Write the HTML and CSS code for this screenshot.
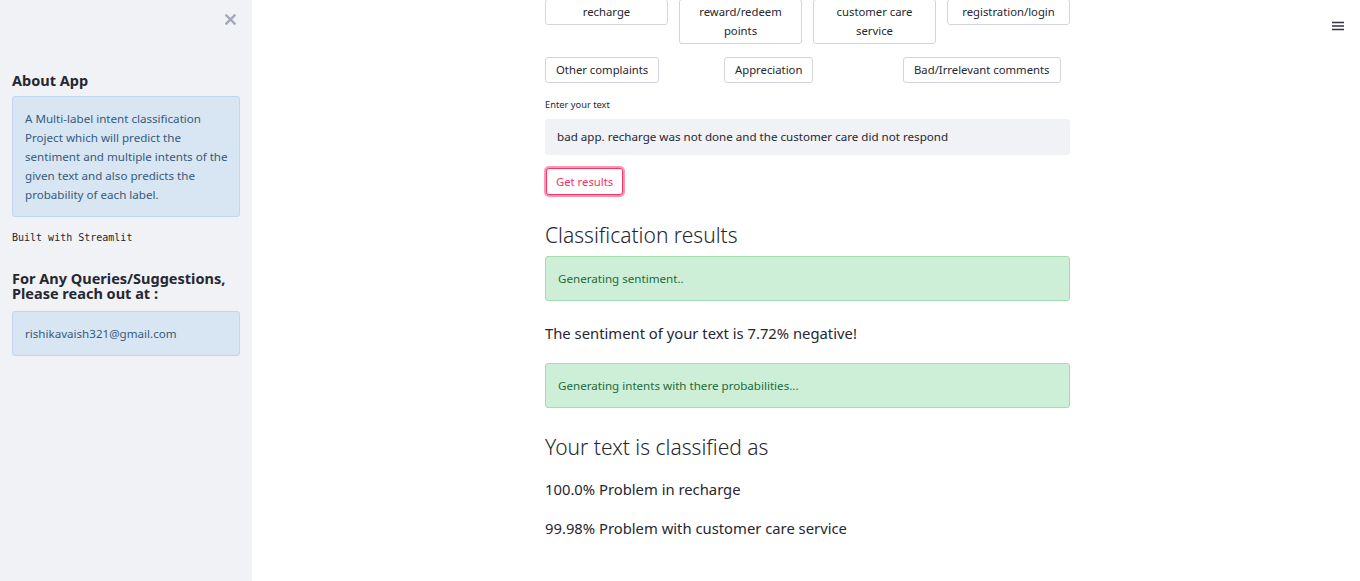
FILE: index.html
```html
<!DOCTYPE html>
<html lang="en">
<head>
<meta charset="utf-8">
<title>Intent Classifier</title>
<link rel="stylesheet" href="styles.css">
</head>
<body>
<div class="app">
  <aside class="sidebar">
    <div class="close-row">
      <svg class="close" width="11" height="11" viewBox="0 0 11 11"><path d="M1.5 1.5 L9.5 9.5 M9.5 1.5 L1.5 9.5" stroke="#a3a8b4" stroke-width="2.4" stroke-linecap="square"/></svg>
    </div>
    <h3 class="side-title">About App</h3>
    <div class="info">A Multi-label intent classification Project which will predict the sentiment and multiple intents of the given text and also predicts the probability of each label.</div>
    <p class="mono">Built with Streamlit</p>
    <h3 class="side-title queries">For Any Queries/Suggestions, Please reach out at :</h3>
    <div class="info email">rishikavaish321@gmail.com</div>
  </aside>
  <main class="main">
    <div class="content">
      <div class="cols cols4">
        <div class="col"><button class="btn full">recharge</button></div>
        <div class="col"><button class="btn full">reward/redeem points</button></div>
        <div class="col"><button class="btn full">customer care service</button></div>
        <div class="col"><button class="btn full">registration/login</button></div>
      </div>
      <div class="cols cols3">
        <div class="col"><button class="btn">Other complaints</button></div>
        <div class="col"><button class="btn">Appreciation</button></div>
        <div class="col"><button class="btn">Bad/Irrelevant comments</button></div>
      </div>
      <label class="label">Enter your text</label>
      <div class="input">bad app. recharge was not done and the customer care did not respond</div>
      <button class="btn primary">Get results</button>
      <h2 class="heading h-first">Classification results</h2>
      <div class="success">Generating sentiment..</div>
      <p class="result r-sent">The sentiment of your text is 7.72% negative!</p>
      <div class="success s2">Generating intents with there probabilities...</div>
      <h2 class="heading h-second">Your text is classified as</h2>
      <p class="result r1">100.0% Problem in recharge</p>
      <p class="result r2">99.98% Problem with customer care service</p>
    </div>
  </main>
  <div class="menu">
    <svg width="12" height="10" viewBox="0 0 12 10"><path d="M0 1.5H12M0 5H12M0 8.5H12" stroke="#31333f" stroke-width="1.4"/></svg>
  </div>
</div>
</body>
</html>
```

FILE: styles.css
```css
* { box-sizing: border-box; }
html, body { margin: 0; padding: 0; height: 100%; }
body {
  font-family: "Noto Sans", "Open Sans", sans-serif;
  color: #262730;
  background: #fff;
  overflow: hidden;
}
.app { display: flex; height: 581px; position: relative; }
.sidebar {
  width: 252px;
  flex: none;
  background: #f0f2f6;
  padding: 0 12px;
}
.close-row { display: flex; justify-content: flex-end; padding: 14px 4px 0 0; height: 61px; }
.side-title {
  margin: 10px 0 0;
  font-size: 14.5px;
  font-weight: 700;
  line-height: 18px;
  color: #262730;
}
.info {
  margin-top: 7px;
  background: #d8e6f4;
  border: 1px solid #c0d7ef;
  border-radius: 3px;
  padding: 12px 6px 12px 12px;
  font-size: 11.6px;
  line-height: 19px;
  color: #375a7a;
}
.mono {
  font-family: "DejaVu Sans Mono", "Liberation Mono", monospace;
  font-size: 10px;
  margin: 14px 0 0;
  line-height: 13px;
}
.queries { margin-top: 27px; line-height: 15px; }
.email { margin-top: 10px; }
.main { flex: 1; padding-left: 3px; }
.content { width: 525px; margin: 0 auto; }
.cols { display: flex; gap: 11px; align-items: flex-start; }
.cols4 { margin-top: -1px; }
.cols4 .col { width: 123px; }
.cols3 { margin-top: 13px; gap: 12px; }
.cols3 .col { width: 167px; }
.btn {
  display: block;
  font-family: inherit;
  font-size: 11.3px;
  line-height: 19px;
  color: #262730;
  background: #fff;
  border: 1px solid #d4d5da;
  border-radius: 3px;
  padding: 2px 10px 3px;
}
.btn.full { width: 123px; }
.label {
  display: block;
  margin-top: 16px;
  font-size: 9.3px;
  line-height: 12px;
  color: #262730;
}
.input {
  margin-top: 8px;
  height: 36px;
  background: #f0f2f6;
  border-radius: 3px;
  padding: 0 12px;
  font-size: 11.6px;
  line-height: 36px;
}
.btn.primary {
  margin-top: 13px;
  border-color: #f63366;
  color: #f63366;
  box-shadow: 0 0 0 2px rgba(246, 51, 102, 0.5);
  padding: 3px 9px;
  margin-left: 1px;
}
.heading {
  font-weight: 300;
  font-size: 21px;
  line-height: 28px;
  margin: 0;
  color: #262730;
}
.h-first { margin-top: 26px; }
.success {
  background: #cdefd8;
  border: 1px solid #a4dcb4;
  border-radius: 3px;
  padding: 12px 12px;
  font-size: 11.6px;
  line-height: 19px;
  color: #1d6a3b;
  margin-top: 7px;
}
.result { margin: 0; font-size: 14.8px; line-height: 20px; }
.r-sent { margin-top: 22px; }
.s2 { margin-top: 20px; }
.h-second { margin-top: 25px; }
.r1 { margin-top: 18px; }
.r2 { margin-top: 19px; }
.menu { position: absolute; right: 16px; top: 14px; }
```
